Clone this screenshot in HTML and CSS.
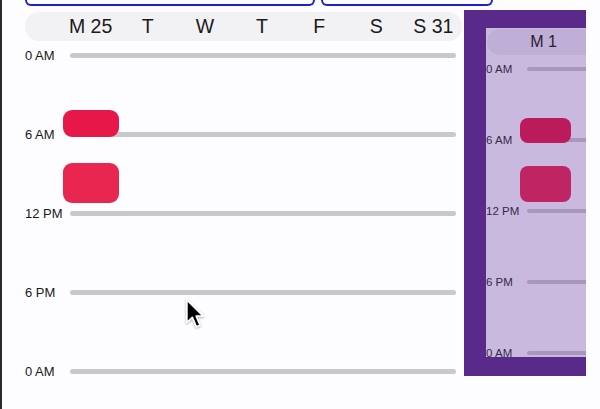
FILE: index.html
```html
<!DOCTYPE html>
<html lang="en">
<head>
    <meta charset="UTF-8">
    <meta name="viewport" content="width=device-width, initial-scale=1.0">
    <title>Week</title>
    <link rel="stylesheet" href="styles.css">
</head>
<body>
    <div class="app">
        <div class="tabs">
            <div class="tab tab-week"></div>
            <div class="tab tab-month"></div>
        </div>

        <div class="stage">
            <section class="week">
                <div class="days">
                    <span>M 25</span>
                    <span>T</span>
                    <span>W</span>
                    <span>T</span>
                    <span>F</span>
                    <span>S</span>
                    <span>S 31</span>
                </div>

                <div class="timeline">
                    <div class="hour"><span class="hour-label">0 AM</span><span class="hour-line"></span></div>
                    <div class="hour"><span class="hour-label">6 AM</span><span class="hour-line"></span></div>
                    <div class="hour"><span class="hour-label">12 PM</span><span class="hour-line"></span></div>
                    <div class="hour"><span class="hour-label">6 PM</span><span class="hour-line"></span></div>
                    <div class="hour"><span class="hour-label">0 AM</span><span class="hour-line"></span></div>

                    <div class="event event-a"></div>
                    <div class="event event-b"></div>
                </div>
            </section>

            <!-- next week sliding in -->
            <section class="next-week">
                <div class="next-inner">
                    <div class="days days-sm">
                        <span>M 1</span>
                    </div>

                    <div class="timeline timeline-sm">
                        <div class="hour"><span class="hour-label">0 AM</span><span class="hour-line"></span></div>
                        <div class="hour"><span class="hour-label">6 AM</span><span class="hour-line"></span></div>
                        <div class="hour"><span class="hour-label">12 PM</span><span class="hour-line"></span></div>
                        <div class="hour"><span class="hour-label">6 PM</span><span class="hour-line"></span></div>
                        <div class="hour"><span class="hour-label">0 AM</span><span class="hour-line"></span></div>

                        <div class="event event-a"></div>
                        <div class="event event-b"></div>
                    </div>
                </div>
            </section>
        </div>

        <svg class="cursor" width="22" height="32" viewBox="0 0 18 26">
            <path d="M1.5 1.5 V20 L6 15.8 L9.3 23.5 L12.3 22.2 L9.2 14.7 H15 Z" fill="#000" stroke="#fff" stroke-width="1.4" stroke-linejoin="round"/>
        </svg>
    </div>
</body>
</html>
```

FILE: styles.css
```css
body {
    margin: 0;
    background-color: #fdfcfe;
    font-family: "Liberation Sans", Arial, sans-serif;
    color: #1a1a1a;
}

.app {
    position: relative;
    height: 409px;
    border-left: 2px solid #2b2b2b;
    overflow: hidden;
}

/* view switcher, scrolled mostly out of sight */
.tabs {
    display: flex;
    gap: 6px;
    height: 6px;
    padding-left: 23px;
}

.tab {
    box-sizing: border-box;
    height: 6px;
    border: 2px solid #1f1fcf;
    border-top: none;
    border-radius: 0 0 7px 7px;
}

.tab-week {
    width: 290px;
}

.tab-month {
    width: 172px;
}

.stage {
    display: flex;
    align-items: flex-start;
}

.week {
    width: 437px;
    padding: 6px 0 0 23px;
}

.days {
    display: grid;
    grid-template-columns: repeat(7, 1fr);
    align-items: center;
    height: 29px;
    padding-left: 37px;
    background-color: #f2f1f4;
    border-radius: 14px;
    font-size: 19.5px;
    text-align: center;
}

.timeline {
    position: relative;
    display: flex;
    flex-direction: column;
    gap: 66px;
    padding-top: 8px;
}

.hour {
    display: flex;
    align-items: center;
    height: 13px;
}

.hour-label {
    flex: none;
    width: 45px;
    font-size: 13px;
    white-space: nowrap;
}

.hour-line {
    flex: none;
    width: 386px;
    height: 5px;
    border-radius: 3px;
    background-color: #c9c9cb;
}

.event {
    position: absolute;
    left: 38px;
    width: 56px;
    border-radius: 9px;
}

.event-a {
    top: 69px;
    height: 27px;
    background-color: #e8174a;
}

.event-b {
    top: 122px;
    height: 40px;
    background-color: #e8264f;
}

/* incoming week */
.next-week {
    box-sizing: border-box;
    flex: none;
    width: 122px;
    height: 366px;
    margin: 4px 0 0 2px;
    padding: 18px 0 19px 22px;
    background-color: #5a2a8b;
}

.next-inner {
    height: 100%;
    background-color: #c9b9de;
    overflow: hidden;
}

.days-sm {
    width: 130px;
    height: 26px;
    margin: 1px 0 0 1px;
    padding-left: 0;
    grid-template-columns: 113px;
    border-radius: 13px;
    background-color: #bfaed6;
    font-size: 16px;
    color: #2a2233;
}

.timeline-sm {
    gap: 59px;
    padding-top: 8px;
}

.timeline-sm .hour {
    height: 12px;
}

.timeline-sm .hour-label {
    width: 41px;
    font-size: 11.5px;
    color: #352a45;
}

.timeline-sm .hour-line {
    width: 80px;
    height: 4px;
    border-radius: 2px;
    background-color: #a797bb;
}

.timeline-sm .event {
    left: 34px;
    width: 51px;
    border-radius: 8px;
}

.timeline-sm .event-a {
    top: 63px;
    height: 25px;
    background-color: #bc1b5b;
}

.timeline-sm .event-b {
    top: 111px;
    height: 36px;
    background-color: #c02563;
}

.cursor {
    position: absolute;
    left: 183px;
    top: 298px;
    filter: drop-shadow(0 1px 1px rgba(0, 0, 0, 0.3));
}
```
